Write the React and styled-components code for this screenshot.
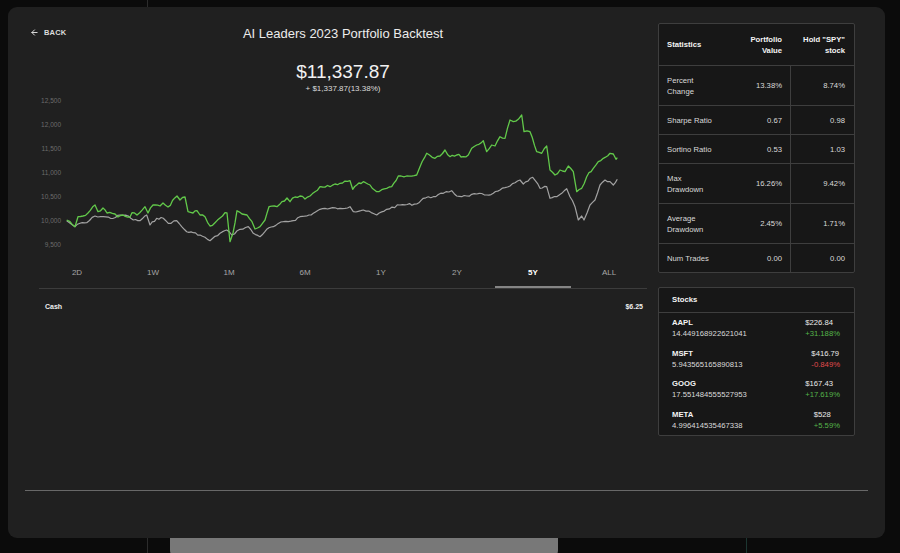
import React from 'react'
import styled, { createGlobalStyle } from 'styled-components'
import { ArrowLeft } from 'lucide-react'

const GlobalStyle = createGlobalStyle`
  body {
    margin: 0;
    background: #0b0b0b;
    font-family: "Liberation Sans", Arial, sans-serif;
  }
`

const Stage = styled.div`
  position: relative;
  width: 900px;
  height: 553px;
  overflow: hidden;
  padding: 7px 15px 0 8px;
  box-sizing: border-box;
`

// thin lines of the page behind the sheet
const GuideLine = styled.div`
  position: absolute;
  left: ${p => p.$x}px;
  top: ${p => p.$top}px;
  bottom: 0;
  width: 1px;
  background: ${p => p.$color};
`

const Panel = styled.div`
  position: relative;
  z-index: 1;
  height: 531px;
  background: #202020;
  border-radius: 9px;
  padding: 0 17px;
  box-sizing: border-box;
  display: flex;
  flex-direction: column;
`

const TopSection = styled.div`
  display: flex;
  height: 483px;
  padding-top: 16px;
  box-sizing: border-box;
  flex-shrink: 0;
`

const MainColumn = styled.div`
  flex: 1;
  padding: 1px 11px 0 14px;
  min-width: 0;
`

const SideColumn = styled.div`
  width: 197px;
  margin-right: 13px;
  flex-shrink: 0;
`

const Divider = styled.div`
  height: 1px;
  background: #686868;
  flex-shrink: 0;
`

const Header = styled.div`
  display: grid;
  grid-template-columns: 1fr auto 1fr;
  align-items: start;
  height: 20px;
`

const BackButton = styled.div`
  display: flex;
  align-items: center;
  gap: 5px;
  height: 16px;
  margin-left: -9px;
  color: #dcdcdc;
  font-size: 7.5px;
  font-weight: 700;
  letter-spacing: 0.2px;
`

const Title = styled.div`
  color: #ececec;
  font-size: 13px;
  line-height: 20px;
`

const Value = styled.div`
  margin-top: 17px;
  text-align: center;
  color: #f2f2f2;
  font-size: 19px;
  line-height: 22px;
`

const Change = styled.div`
  margin-top: 1px;
  text-align: center;
  color: #dcdcdc;
  font-size: 8px;
  line-height: 10px;
`

const ChartSvg = styled.svg`
  display: block;
  width: 608px;
  height: 168px;
`

const Tabs = styled.div`
  display: flex;
  border-bottom: 1px solid #3c3c3c;
`

const Tab = styled.div`
  width: 76px;
  height: 26px;
  box-sizing: border-box;
  padding-top: 6px;
  text-align: center;
  font-size: 8px;
  line-height: 10px;
  color: ${p => (p.$active ? '#ffffff' : '#a6a6a6')};
  font-weight: ${p => (p.$active ? 700 : 400)};
  border-bottom: 2px solid ${p => (p.$active ? '#858585' : 'transparent')};
`

const CashRow = styled.div`
  display: flex;
  justify-content: space-between;
  padding: 13px 4px 0 6px;
  color: #eeeeee;
  font-size: 7px;
  font-weight: 700;
  line-height: 10px;
`

const Card = styled.div`
  background: #171717;
  border: 1px solid #3e3e3e;
  border-radius: 2px;
  margin-top: ${p => p.$gap || 0}px;
`

const StatRow = styled.div`
  display: grid;
  grid-template-columns: 79px 52px 1fr;
  border-bottom: 1px solid #3e3e3e;
  &:last-child {
    border-bottom: none;
  }
`

const StatCell = styled.div`
  display: flex;
  align-items: center;
  justify-content: ${p => (p.$right ? 'flex-end' : 'flex-start')};
  text-align: ${p => (p.$right ? 'right' : 'left')};
  padding: ${p => (p.$head ? '9.5px' : '8.5px')} ${p => p.$pr || 8}px
    ${p => (p.$head ? '9.5px' : '8.5px')} ${p => p.$pl || 8}px;
  border-left: ${p => (p.$split ? '1px solid #3e3e3e' : 'none')};
  white-space: pre-line;
  color: ${p => (p.$head ? '#f4f4f4' : '#dadada')};
  font-weight: ${p => (p.$head ? 700 : 400)};
  font-size: 7.7px;
  line-height: 11px;
`

const CardHeader = styled.div`
  height: 24px;
  line-height: 24px;
  padding: 0 13px;
  border-bottom: 1px solid #3e3e3e;
  color: #f4f4f4;
  font-size: 7.7px;
  font-weight: 700;
`

const StockRow = styled.div`
  display: flex;
  justify-content: space-between;
  padding: 4px 14px 4.5px 13px;
  font-size: 7.7px;
  line-height: 11px;
  color: #dadada;
`

const Ticker = styled.div`
  color: #f4f4f4;
  font-weight: 700;
`

const PriceBlock = styled.div`
  display: flex;
  flex-direction: column;
  align-items: flex-start;
`

const Price = styled.div`
  color: #eaeaea;
`

const Pct = styled.div`
  color: ${p => (p.$up ? '#55b44a' : '#e04a4d')};
`

const BottomTab = styled.div`
  margin-left: 162px;
  width: 388px;
  height: 22px;
  background: #787878;
  border-radius: 0 0 10px 10px;
`

const green = [
  [66.7, 220], [70, 221.7], [75, 226.7], [78, 216.7], [83, 216], [88, 213], [95, 205], [98, 211.7],
  [103, 208], [107, 213], [115, 214], [118, 217], [123, 215], [130, 217], [132, 212.7], [137, 215],
  [145, 206.7], [148, 213], [153, 205], [160, 206], [163, 203], [168, 207], [177, 196], [180, 200],
  [185, 197], [188, 211.7], [193, 213], [197, 210.7], [200, 215], [205, 216.7], [210, 226], [215, 222.7],
  [220, 218], [225, 212.7], [227, 213], [230, 241.7], [233, 233], [237, 210.7], [242, 214], [247, 215],
  [252, 221.7], [255, 229], [260, 226.7], [265, 220], [269, 206.7], [277, 206.7], [282, 201.7], [287, 198],
  [290, 201.7], [295, 197], [300, 196], [305, 199], [310, 196], [315, 191.7], [320, 186.7], [330, 186.7],
  [340, 183.3], [350, 180.7], [352.7, 189.3], [356.7, 185], [363.3, 181.7], [370, 185], [376.7, 191.7],
  [386.7, 188.3], [391.7, 186.7], [398.3, 176], [406.7, 176], [416.7, 175], [420, 166.7], [426.7, 153.3],
  [435, 158.3], [440, 156], [445, 150], [450, 156.7], [456.7, 155], [463.3, 156.7], [468.3, 155],
  [471.7, 148.3], [476.7, 145], [483.3, 140.7], [486.7, 151.7], [491.7, 145], [495, 146], [500, 136.7],
  [505, 138.3], [510, 120], [513.3, 121.7], [518.3, 119.3], [521.7, 115], [524, 131.7], [530, 131.7],
  [536.7, 151.7], [541.7, 153.3], [546.7, 146], [550, 170], [555, 175], [560, 170], [565, 171.7],
  [568.3, 166], [573.3, 171.7], [576.7, 191.7], [581.7, 188.3], [586.7, 176.7], [593.3, 168.3],
  [598.3, 161.7], [603.3, 158.3], [610, 153.3], [613.3, 154], [616, 159.3], [617.3, 157.7]
]

const grey = [
  [66.7, 220.7], [75, 226.7], [80, 223.3], [86.7, 222.7], [95, 216], [103.3, 216.7], [113.3, 218.3],
  [120, 215], [128.3, 216], [133.3, 220], [140, 220.7], [146.7, 215], [150, 225], [156.7, 218.3],
  [163.3, 218.3], [168.3, 223.3], [176.7, 220.7], [181.7, 226.7], [186.7, 231.7], [193.3, 232.7],
  [200, 235], [210, 240.7], [220, 233.3], [226.7, 230], [231.7, 235], [240, 229.3], [248.3, 226.7],
  [253.3, 233.3], [260, 236.7], [266.7, 229.3], [273.3, 226.7], [283.3, 221.7], [293.3, 220.7],
  [300, 216.7], [306.7, 216], [313.3, 213.3], [320, 209.3], [330, 208.3], [340, 208.3], [350, 206.7],
  [353.3, 211.7], [363.3, 210], [376.7, 215], [386.7, 209.3], [400, 205], [416.7, 204], [423.3, 198.3],
  [433.3, 196.7], [443.3, 193.3], [451.7, 190.7], [456.7, 196], [466.7, 196], [476.7, 194], [486.7, 195],
  [493.3, 193.3], [500, 190], [510, 186], [520, 180], [523.3, 184], [532.7, 177.3], [540, 188.3],
  [546.7, 186.7], [550, 198.3], [556.7, 196.7], [561.7, 193.3], [566.7, 188.7], [570, 196.7],
  [575, 206.7], [578.3, 220], [581.7, 216], [584, 220], [590, 205], [595, 200], [600, 185], [605, 180],
  [610, 181.7], [613.3, 185], [617.3, 179.3]
]

// fill in small zig-zags between the traced points
function jagged(points, amp, seed) {
  let s = seed
  const rnd = () => {
    s = (s * 9301 + 49297) % 233280
    return s / 233280 - 0.5
  }
  const out = []
  for (let i = 0; i < points.length - 1; i++) {
    const [x1, y1] = points[i]
    const [x2, y2] = points[i + 1]
    out.push([x1, y1])
    const steps = Math.max(1, Math.round((x2 - x1) / 2.5))
    for (let k = 1; k < steps; k++) {
      const t = k / steps
      out.push([x1 + (x2 - x1) * t, y1 + (y2 - y1) * t + rnd() * amp])
    }
  }
  out.push(points[points.length - 1])
  return out.map(p => p[0].toFixed(1) + ',' + p[1].toFixed(1)).join(' ')
}

const yTicks = ['12,500', '12,000', '11,500', '11,000', '10,500', '10,000', '9,500']
const ranges = ['2D', '1W', '1M', '6M', '1Y', '2Y', '5Y', 'ALL']

const stats = [
  { label: 'Percent\nChange', a: '13.38%', b: '8.74%' },
  { label: 'Sharpe Ratio', a: '0.67', b: '0.98' },
  { label: 'Sortino Ratio', a: '0.53', b: '1.03' },
  { label: 'Max\nDrawdown', a: '16.26%', b: '9.42%' },
  { label: 'Average\nDrawdown', a: '2.45%', b: '1.71%' },
  { label: 'Num Trades', a: '0.00', b: '0.00' }
]

const stocks = [
  { ticker: 'AAPL', shares: '14.449168922621041', price: '$226.84', pct: '+31.188%', up: true },
  { ticker: 'MSFT', shares: '5.943565165890813', price: '$416.79', pct: '-0.849%', up: false },
  { ticker: 'GOOG', shares: '17.551484555527953', price: '$167.43', pct: '+17.619%', up: true },
  { ticker: 'META', shares: '4.996414535467338', price: '$528', pct: '+5.59%', up: true }
]

const Chart = () => (
  <ChartSvg viewBox="39 94 608 168">
    {yTicks.map((t, i) => (
      <text
        key={t}
        x={61}
        y={101 + i * 24 + 2.3}
        textAnchor="end"
        fontSize="6.5"
        fill="#6c6c6c"
        fontFamily="Liberation Sans, Arial, sans-serif"
      >
        {t}
      </text>
    ))}
    <polyline points={jagged(grey, 2, 7)} fill="none" stroke="#a2a2a2" strokeWidth="1.2" strokeLinejoin="round" />
    <polyline points={jagged(green, 2.4, 13)} fill="none" stroke="#62c94a" strokeWidth="1.3" strokeLinejoin="round" />
  </ChartSvg>
)

const App = () => {
  return (
    <Stage>
      <GlobalStyle />
      <GuideLine $x={147} $top={0} $color="#2c2c2c" />
      <GuideLine $x={746} $top={538} $color="#1c3631" />
      <Panel>
        <TopSection>
          <MainColumn>
            <Header>
              <BackButton>
                <ArrowLeft size={9} strokeWidth={2.6} />
                BACK
              </BackButton>
              <Title>AI Leaders 2023 Portfolio Backtest</Title>
              <div />
            </Header>
            <Value>$11,337.87</Value>
            <Change>+ $1,337.87(13.38%)</Change>
            <Chart />
            <Tabs>
              {ranges.map(r => (
                <Tab key={r} $active={r === '5Y'}>{r}</Tab>
              ))}
            </Tabs>
            <CashRow>
              <span>Cash</span>
              <span>$6.25</span>
            </CashRow>
          </MainColumn>
          <SideColumn>
            <Card>
              <StatRow>
                <StatCell $head>Statistics</StatCell>
                <StatCell $head $right>{'Portfolio\nValue'}</StatCell>
                <StatCell $head $right $pr={9}>{'Hold "SPY"\nstock'}</StatCell>
              </StatRow>
              {stats.map(s => (
                <StatRow key={s.label}>
                  <StatCell>{s.label}</StatCell>
                  <StatCell $right>{s.a}</StatCell>
                  <StatCell $right $split $pr={9}>{s.b}</StatCell>
                </StatRow>
              ))}
            </Card>
            <Card $gap={14}>
              <CardHeader>Stocks</CardHeader>
              {stocks.map(s => (
                <StockRow key={s.ticker}>
                  <div>
                    <Ticker>{s.ticker}</Ticker>
                    <div>{s.shares}</div>
                  </div>
                  <PriceBlock>
                    <Price>{s.price}</Price>
                    <Pct $up={s.up}>{s.pct}</Pct>
                  </PriceBlock>
                </StockRow>
              ))}
            </Card>
          </SideColumn>
        </TopSection>
        <Divider />
      </Panel>
      <BottomTab />
    </Stage>
  )
}

export default App
